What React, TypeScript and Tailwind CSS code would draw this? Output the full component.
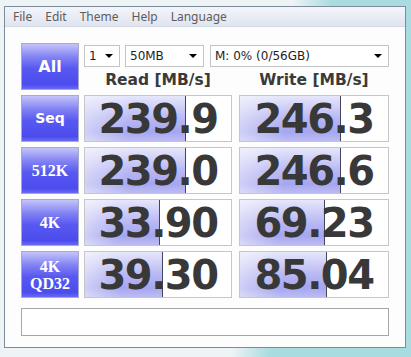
import React from "react";

const rows = [
  { label: ["Seq"], serif: false, read: "239.9", rw: 101, write: "246.3", ww: 101 },
  { label: ["512K"], serif: true, read: "239.0", rw: 101, write: "246.6", ww: 101 },
  { label: ["4K"], serif: true, read: "33.90", rw: 75, write: "69.23", ww: 85 },
  { label: ["4K", "QD32"], serif: true, read: "39.30", rw: 78, write: "85.04", ww: 87 },
];

const btn =
  "flex flex-col items-center justify-center border border-[#a9aacb] text-white font-bold bg-[linear-gradient(to_bottom,#c4c4fa,#8080f4_30%,#5858f0_55%,#4c4cee_90%,#6a6af2)]";

const bar =
  "bg-[linear-gradient(to_right,rgba(255,255,255,0.45),rgba(255,255,255,0)_45%),linear-gradient(to_bottom,#e6e6fb,#b8b8f4_50%,#a6a6f1_80%,#bcbcf4)]";

function Combo({ w, text }: { w: string; text: string }) {
  return (
    <div
      className={`${w} h-[22px] flex items-center justify-between pl-[4px] pr-[6px] bg-white border border-[#c4c4c4] text-[12px] text-[#1e1e1e] font-['DejaVu_Sans',sans-serif]`}
    >
      <span>{text}</span>
      <span className="w-0 h-0 border-l-[4px] border-r-[4px] border-t-[4px] border-l-transparent border-r-transparent border-t-black" />
    </div>
  );
}

function Meter({ value, fill, w }: { value: string; fill: number; w: string }) {
  return (
    <div className={`${w} relative h-full border border-[#c6c6c6] bg-white`}>
      <div
        className={`absolute left-0 top-0 bottom-0 border-r border-[#44445e] ${bar}`}
        style={{ width: fill }}
      />
      <div className="relative h-full flex items-center justify-center text-[40px] leading-none font-bold tracking-[-1.5px] text-[#383838] font-['DejaVu_Sans',sans-serif]">
        {value}
      </div>
    </div>
  );
}

export default function App() {
  return (
    <div className="w-[411px] h-[357px] overflow-hidden bg-[linear-gradient(100deg,#eef3f6_62%,#a9dce0_70%)] pl-[4px] pt-[6px]">
      <div className="w-[402px] h-[342px] border border-[#7d8c9a] bg-white flex flex-col">
        <div className="h-[20px] flex items-center gap-[13px] pl-[8px] border-b border-[#d3d9e4] bg-[linear-gradient(to_bottom,#f3f5fa,#dfe4ef)] text-[12px] text-[#5c5c5c] font-['Noto_Sans',sans-serif]">
          <span>File</span>
          <span>Edit</span>
          <span>Theme</span>
          <span>Help</span>
          <span>Language</span>
        </div>
        <div className="flex-1 flex flex-col pl-[16px] pt-[16px] gap-[5px] bg-[#fdfdfd]">
          <div className="flex h-[47px]">
            <div className={`${btn} w-[58px] text-[16px] font-['DejaVu_Sans',sans-serif]`}>All</div>
            <div className="ml-[5px] flex flex-col">
              <div className="flex gap-[5px] mt-[2px]">
                <Combo w="w-[36px]" text="1" />
                <Combo w="w-[79px]" text="50MB" />
                <Combo w="w-[179px] ml-[1px]" text="M: 0% (0/56GB)" />
              </div>
              <div className="flex mt-[3px] text-[15.5px] font-bold text-[#3a3a3a] font-['DejaVu_Sans',sans-serif] leading-[20px]">
                <div className="w-[148px] text-center">Read [MB/s]</div>
                <div className="w-[150px] ml-[7px] text-center">Write [MB/s]</div>
              </div>
            </div>
          </div>
          {rows.map((r) => (
            <div key={r.read} className="flex h-[47px]">
              <div
                className={`${btn} w-[58px] leading-[17px] ${
                  r.serif
                    ? "text-[16px] font-['Liberation_Serif',serif]"
                    : "text-[14px] font-['DejaVu_Sans',sans-serif]"
                }`}
              >
                {r.label.map((l) => (
                  <span key={l}>{l}</span>
                ))}
              </div>
              <div className="ml-[5px] h-full">
                <Meter value={r.read} fill={r.rw} w="w-[148px]" />
              </div>
              <div className="ml-[7px] h-full">
                <Meter value={r.write} fill={r.ww} w="w-[150px]" />
              </div>
            </div>
          ))}
          <div className="mt-[5px] w-[368px] h-[28px] border border-[#a6a6a6] bg-white" />
        </div>
      </div>
    </div>
  );
}
